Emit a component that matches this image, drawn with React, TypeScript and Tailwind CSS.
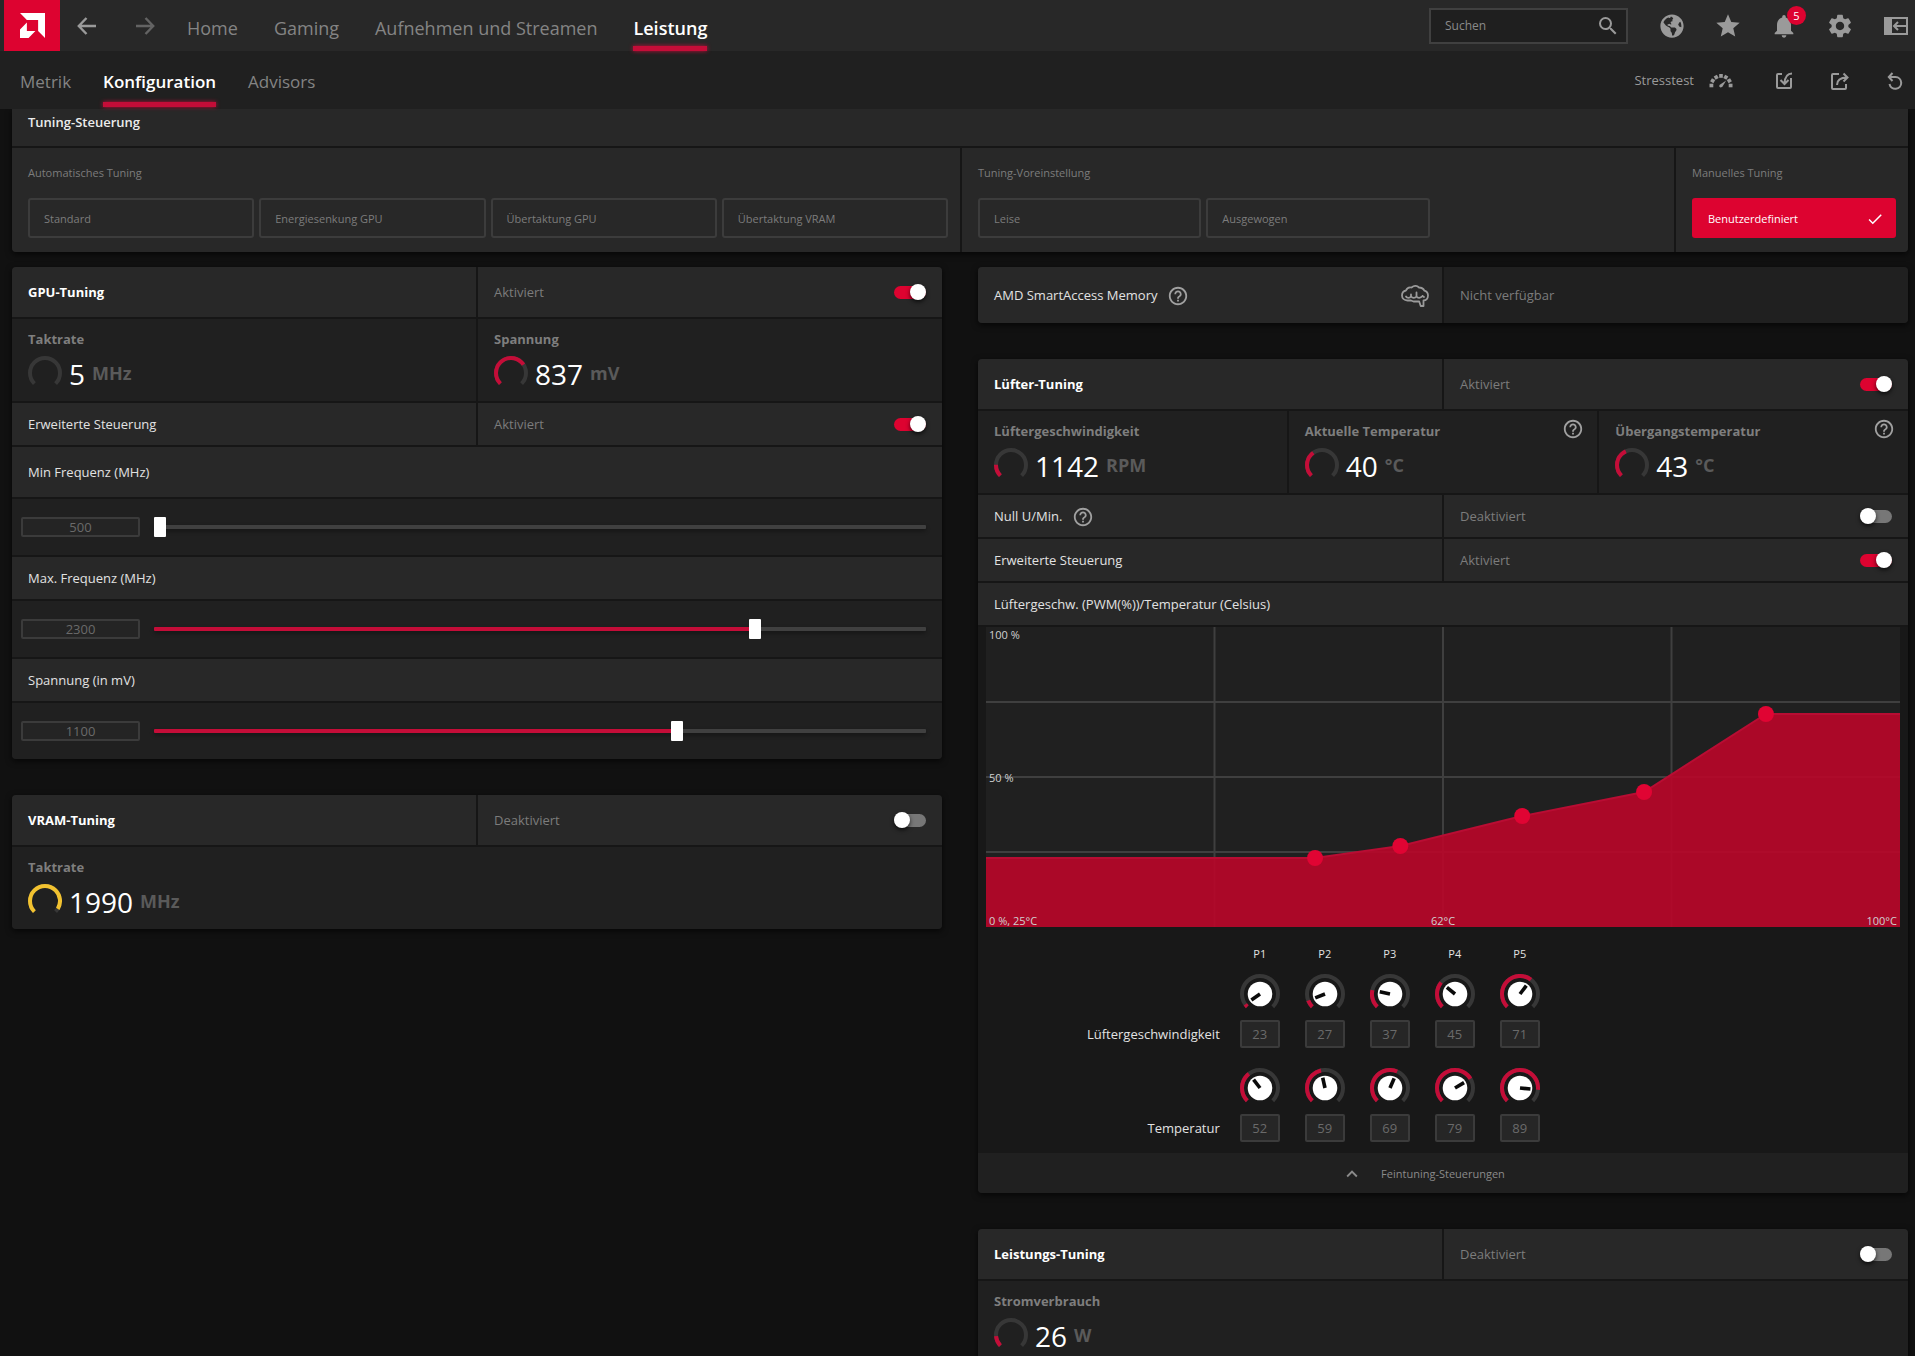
import React, { useState } from "react";
import { FaGlobeAmericas } from "react-icons/fa";
import {
  MdCheck,
  MdHelpOutline,
  MdKeyboardArrowUp,
  MdNotifications,
  MdSearch,
  MdSettings,
  MdStar,
} from "react-icons/md";

const RED = "#c40d38";

const TEMP_MIN = 25;
const TEMP_MAX = 100;
const FAN_MIN = 20;

const fanCurve = [
  { name: "P1", speed: 23, temp: 52 },
  { name: "P2", speed: 27, temp: 59 },
  { name: "P3", speed: 37, temp: 69 },
  { name: "P4", speed: 45, temp: 79 },
  { name: "P5", speed: 71, temp: 89 },
];

/* ---------- icons ---------- */

const AmdLogo = () => (
  <svg viewBox="0 0 24 24" className="h-[25px] w-[25px]" fill="#fff" aria-hidden="true">
    <path d="M0 0h24v24l-6.600-6.600V6.600H6.600z" />
    <path d="M6.600 9.200v8.200h8.200L8.200 24H0v-8.200z" />
  </svg>
);

const ArrowIcon = ({ flip = false }: { flip?: boolean }) => (
  <svg viewBox="0 0 20 18" className={flip ? "w-5 rotate-180" : "w-5"} fill="none" stroke="currentColor" strokeWidth="2.400" aria-hidden="true">
    <path d="M9.500 1 1.800 9l7.700 8M2 9h17" />
  </svg>
);

const DockIcon = () => (
  <svg viewBox="0 0 24 18" className="w-6" fill="none" stroke="currentColor" strokeWidth="2" aria-hidden="true">
    <path d="M1 1h22v16H1z" />
    <path d="M1 1h6v16H1z" fill="currentColor" />
    <path d="M22 9H10M14 5l-4 4 4 4" />
  </svg>
);

const StressIcon = () => (
  <svg viewBox="0 0 26 16" className="w-[26px]" fill="currentColor" aria-hidden="true">
    {[-90, -60, -30, 0, 30, 60, 90].map((a) => (
      <rect key={a} x="11.200" y="1" width="3.600" height="3.800" transform={`rotate(${a} 13 12.5)`} />
    ))}
    <path d="m11 13 1.200 1.500 2-.5 4-6.500-6 4z" />
  </svg>
);

const ImportIcon = () => (
  <svg viewBox="0 0 18 18" className="w-[18px]" fill="none" stroke="currentColor" strokeWidth="2" aria-hidden="true">
    <path d="M7 2H3a1 1 0 0 0-1 1v12a1 1 0 0 0 1 1h12a1 1 0 0 0 1-1V6" />
    <path d="M17 1.500c-4 0-7 2-7.500 10M5.500 8l4 4 4-4" />
  </svg>
);

const ExportIcon = () => (
  <svg viewBox="0 0 18 18" className="w-[18px]" fill="none" stroke="currentColor" strokeWidth="2" aria-hidden="true">
    <path d="M8 2H2a1 1 0 0 0-1 1v13a1 1 0 0 0 1 1h12a1 1 0 0 0 1-1v-4" />
    <path d="M6 13c0-5 3-7.500 10-7.500M12.500 1.500l4 4-4 4" />
  </svg>
);

const ResetIcon = () => (
  <svg viewBox="0 0 16 18" className="w-4" fill="none" stroke="currentColor" strokeWidth="2" aria-hidden="true">
    <path d="M2 5h6.500a5.900 5.900 0 1 1-6 7M5.500 1 1.800 5l3.700 4" />
  </svg>
);

const BrainIcon = () => (
  <svg viewBox="0 0 28 22" className="w-7 text-[#9a9a9a]" fill="none" stroke="currentColor" strokeWidth="1.800" strokeLinejoin="round" strokeLinecap="round" aria-hidden="true">
    <path d="M10 15.500H6.500C3 15.500 1 13 1 10.500S2.500 6 5 5.500C6 3 8.500 2 10.500 2.500 13 .6 16 .6 18 2.500c3 0 4.500 1.300 5.300 3.200C26 6.500 27 8.500 27 10.500c0 2.800-1.800 5-4.500 5V21h-2.800l-1.500-4.500h-5.700z" />
    <path d="M5 11.500c1 1.800 3.800 1.800 5 0 1.500 1.800 4 1.800 5.500 0 1.300 1.800 4 1.800 6-.5M10 11.500V9.500M15.500 11.500V7.500M21.500 11l1.500 1" />
  </svg>
);

/* ---------- small controls ---------- */

const HelpButton = () => (
  <button type="button" aria-label="Hilfe" className="text-[#a0a0a0]">
    <MdHelpOutline size={22} />
  </button>
);

const Toggle = ({ label, on = false }: { label: string; on?: boolean }) => {
  const [checked, setChecked] = useState(on);
  return (
    <input
      type="checkbox"
      role="switch"
      aria-label={label}
      checked={checked}
      onChange={(e) => setChecked(e.target.checked)}
      className="flex h-[13px] w-8 shrink-0 cursor-pointer appearance-none items-center rounded-full bg-[#777] after:size-4 after:shrink-0 after:rounded-full after:bg-white after:shadow-[0_2px_4px_rgba(0,0,0,0.7)] after:content-[''] checked:justify-end checked:bg-[#dd0330]"
    />
  );
};

const Arc = ({ c, r, value, color }: { c: number; r: number; value: number; color: string }) => {
  const k = r * Math.SQRT1_2;
  const d = `M${c - k} ${c + k}A${r} ${r} 0 1 1 ${c + k} ${c + k}`;
  return (
    <g fill="none" strokeWidth="4">
      <path d={d} stroke="#373737" />
      {value > 0 && <path d={d} stroke={color} pathLength={100} strokeDasharray={`${value * 100} 200`} />}
    </g>
  );
};

const Gauge = ({ label, value, unit, level, color = RED, help = false }: {
  label: string;
  value: string;
  unit: string;
  level: number;
  color?: string;
  help?: boolean;
}) => (
  <div className="flex h-[82px] justify-between bg-[#202020] pt-2.5 pr-[13px] pl-4">
    <div>
      <h3 className="text-[13px] leading-5 font-bold text-[#7e7e7e]">{label}</h3>
      <div className="mt-1 flex items-center gap-[7px]">
        <svg viewBox="0 0 34 34" className="size-[34px]" aria-hidden="true">
          <Arc c={17} r={15} value={level} color={color} />
        </svg>
        <span className="pt-[3px] pb-px text-[28px] leading-9 text-white">{value}</span>
        <span className="text-lg leading-6 font-bold text-[#5a5a5a]">{unit}</span>
      </div>
    </div>
    {help && (
      <div className="-mt-[3px]">
        <HelpButton />
      </div>
    )}
  </div>
);

const Knob = ({ level }: { level: number }) => (
  <svg viewBox="0 0 40 40" className="size-10" aria-hidden="true">
    <Arc c={20} r={18} value={level} color={RED} />
    <circle cx="20" cy="20" r="12.300" fill="#fff" />
    <path d="M20 20V9.500" stroke="#0a0a0a" strokeWidth="3.600" transform={`rotate(${level * 270 - 135} 20 20)`} />
  </svg>
);

/* ---------- card rows ---------- */

const Card = ({ children }: { children: React.ReactNode }) => (
  <section className="flex flex-col gap-0.5 overflow-hidden rounded-[4px] bg-[#161616] shadow-[0_2px_6px_rgba(0,0,0,0.7)]">
    {children}
  </section>
);

const SwitchRow = ({ title, on = false, main = false, help = false }: {
  title: string;
  on?: boolean;
  main?: boolean;
  help?: boolean;
}) => (
  <div className={`grid grid-cols-2 gap-0.5 ${main ? "h-[50px]" : "h-[42px]"}`}>
    <div className="flex items-center gap-2.5 bg-[#282828] px-4 pt-0.5">
      {main ? <h2 className="font-bold text-white">{title}</h2> : <h3 className="text-[#e2e2e2]">{title}</h3>}
      {help && <HelpButton />}
    </div>
    <div className="flex items-center justify-between bg-[#282828] px-4">
      <span className="pt-0.5 text-[#7c7c7c]">{on ? "Aktiviert" : "Deaktiviert"}</span>
      <Toggle label={title} on={on} />
    </div>
  </div>
);

const SliderRow = ({ id, label, value, min, max, tall = false }: {
  id: string;
  label: string;
  value: number;
  min: number;
  max: number;
  tall?: boolean;
}) => {
  const [current, setCurrent] = useState(value);
  const pct = ((current - min) / (max - min)) * 100;
  return (
    <>
      <div className={`flex items-center bg-[#282828] px-4 pt-0.5 ${tall ? "h-[50px]" : "h-[42px]"}`}>
        <label htmlFor={id} className="text-[#e2e2e2]">{label}</label>
      </div>
      <div className="flex h-14 items-center gap-3.5 bg-[#202020] pr-4 pl-[9px]">
        <input
          type="text"
          aria-label={`${label} Wert`}
          value={current}
          onChange={(e) => setCurrent(Number(e.target.value) || min)}
          className="h-5 w-[119px] rounded-[2px] border-2 border-[#3b3b3b] bg-[#242424] text-center text-[13px] leading-4 text-[#6a6a6a]"
        />
        <input
          id={id}
          type="range"
          min={min}
          max={max}
          value={current}
          onChange={(e) => setCurrent(Number(e.target.value))}
          style={{ background: `linear-gradient(to right, ${RED} ${pct}%, #404040 ${pct}%)` }}
          className="h-1 min-w-0 flex-1 cursor-pointer appearance-none rounded-[1px] shadow-[0_2px_4px_rgba(0,0,0,0.4)] [&::-webkit-slider-thumb]:h-5 [&::-webkit-slider-thumb]:w-3 [&::-webkit-slider-thumb]:appearance-none [&::-webkit-slider-thumb]:rounded-[1px] [&::-webkit-slider-thumb]:bg-white"
        />
      </div>
    </>
  );
};

const TuningOption = ({ label }: { label: string }) => (
  <button type="button" className="h-10 rounded-[3px] border-2 border-[#3c3c3c] pt-0.5 pl-3.5 text-left text-[11px] text-[#7c7c7c]">
    {label}
  </button>
);

/* ---------- fan curve ---------- */

const CHART_W = 914;
const CHART_H = 300;

const FanChart = () => {
  const pts = fanCurve.map((p) => ({
    x: ((p.temp - TEMP_MIN) / (TEMP_MAX - TEMP_MIN)) * CHART_W,
    y: CHART_H - (p.speed / 100) * CHART_H,
  }));
  const line = [`0,${pts[0].y}`, ...pts.map((p) => `${p.x},${p.y}`), `${CHART_W},${pts[4].y}`].join(" ");
  return (
    <svg viewBox={`0 0 ${CHART_W} ${CHART_H}`} className="block w-full bg-[#202020]" role="img" aria-label="Lüfterkurve">
      <g stroke="#3f3f3f" strokeWidth="2">
        {[0.25, 0.5, 0.75].map((f) => (
          <React.Fragment key={f}>
            <path d={`M${f * CHART_W} 0V${CHART_H}`} />
            <path d={`M0 ${f * CHART_H}H${CHART_W}`} />
          </React.Fragment>
        ))}
      </g>
      <polygon points={`0,${CHART_H} ${line} ${CHART_W},${CHART_H}`} fill="#ba0529" fillOpacity="0.9" />
      <polyline points={line} fill="none" stroke="#b80d33" strokeWidth="2" />
      {pts.map((p) => (
        <circle key={p.x} cx={p.x} cy={p.y} r="8" fill="#e00433" />
      ))}
      <g fontSize="11" fill="#d0d0d0">
        <text x="3" y="12">100 %</text>
        <text x="3" y="155">50 %</text>
        <text x="3" y="298">0 %, 25°C</text>
        <text x={CHART_W / 2} y="298" textAnchor="middle">62°C</text>
        <text x={CHART_W - 3} y="298" textAnchor="end">100°C</text>
      </g>
    </svg>
  );
};

const KnobRow = ({ label, values, min }: { label: string; values: number[]; min: number }) => (
  <div className="flex items-end gap-5">
    <div className="w-[26%] pb-1 text-right text-[#e2e2e2]">{label}</div>
    <div className="flex gap-[25px]">
      {values.map((v, i) => (
        <div key={i} className="flex w-10 flex-col gap-1.5">
          <Knob level={(v - min) / (100 - min)} />
          <input
            type="text"
            aria-label={`${label} P${i + 1}`}
            defaultValue={v}
            className="h-7 w-10 rounded-[2px] border-2 border-[#3b3b3b] bg-[#262626] text-center text-[13px] text-[#6a6a6a]"
          />
        </div>
      ))}
    </div>
  </div>
);

/* ---------- header ---------- */

const NavLink = ({ label, active = false, sub = false }: { label: string; active?: boolean; sub?: boolean }) => (
  <a
    href="#"
    className={`flex h-full flex-col justify-end ${sub ? "pb-0.5 text-[17px]" : "text-lg"} ${active ? "font-semibold text-white" : "text-[#848484]"}`}
  >
    <span className={sub ? "pb-2" : "pb-1"}>{label}</span>
    <span className={`h-[5px] w-full ${active ? "bg-[#c40d38] shadow-[0_0_4px_#c40d38]" : ""}`} />
  </a>
);

const Header = () => (
  <header className="relative z-10 text-[#9a9a9a]">
    <div className="flex h-[51px] items-center justify-between bg-[#282828] shadow-[0_1px_4px_rgba(0,0,0,0.9)]">
      <div className="flex h-full items-center pl-1">
        <a href="#" aria-label="AMD" className="flex h-full w-14 items-center justify-center bg-[#dd0330]">
          <AmdLogo />
        </a>
        <button type="button" aria-label="Zurück" className="ml-[17px]"><ArrowIcon /></button>
        <button type="button" aria-label="Vorwärts" className="ml-[38px] text-[#636363]"><ArrowIcon flip /></button>
        <nav className="ml-8 flex h-full gap-9">
          <NavLink label="Home" />
          <NavLink label="Gaming" />
          <NavLink label="Aufnehmen und Streamen" />
          <NavLink label="Leistung" active />
        </nav>
      </div>
      <div className="flex items-center gap-[30px] pr-[5px]">
        <label className="flex h-9 w-[199px] items-center justify-between border-2 border-[#404040] bg-[#1f1f1f] pr-1.5 pl-3.5">
          <input type="text" placeholder="Suchen" aria-label="Suchen" className="w-32 bg-transparent text-xs outline-none placeholder:text-[#8a8a8a]" />
          <MdSearch size={24} />
        </label>
        <div className="flex items-center gap-7">
          <button type="button" aria-label="Web" className="flex w-7 justify-center"><FaGlobeAmericas size={24} /></button>
          <button type="button" aria-label="Favoriten"><MdStar size={28} /></button>
          <button type="button" aria-label="Benachrichtigungen" className="relative">
            <MdNotifications size={28} />
            <span className="absolute -top-1.5 -right-2 flex size-[19px] items-center justify-center rounded-full bg-[#dd0330] text-[11px] leading-none text-white">5</span>
          </button>
          <button type="button" aria-label="Einstellungen"><MdSettings size={28} /></button>
          <button type="button" aria-label="Andocken" className="flex w-7 justify-center"><DockIcon /></button>
        </div>
      </div>
    </div>
    <div className="flex h-[58px] items-center justify-between bg-[#202020] pr-3 pl-5">
      <nav className="flex h-full gap-8">
        <NavLink label="Metrik" sub />
        <NavLink label="Konfiguration" sub active />
        <NavLink label="Advisors" sub />
      </nav>
      <div className="flex items-center pt-0.5">
        <button type="button" className="flex items-center gap-3.5 text-[13px]">
          Stresstest
          <StressIcon />
        </button>
        <button type="button" aria-label="Importieren" className="ml-[41px]"><ImportIcon /></button>
        <button type="button" aria-label="Exportieren" className="ml-[38px]"><ExportIcon /></button>
        <button type="button" aria-label="Zurücksetzen" className="ml-[38px]"><ResetIcon /></button>
      </div>
    </div>
  </header>
);

/* ---------- page ---------- */

const TuningControl = () => (
  <section className="overflow-hidden rounded-b-[4px] bg-[#161616] shadow-[0_2px_6px_rgba(0,0,0,0.7)]">
    <div className="flex h-[37px] items-center bg-[#282828] px-4 pb-2.5">
      <h2 className="font-semibold text-[#ececec]">Tuning-Steuerung</h2>
    </div>
    <div className="mt-0.5 grid grid-cols-[948fr_712fr_232fr] gap-0.5 text-[11px] text-[#7c7c7c]">
      <div className="bg-[#282828] pt-4 pr-3 pb-3.5 pl-4">
        <h3 className="mb-4 leading-[18px]">Automatisches Tuning</h3>
        <div className="grid grid-cols-4 gap-[5px]">
          <TuningOption label="Standard" />
          <TuningOption label="Energiesenkung GPU" />
          <TuningOption label="Übertaktung GPU" />
          <TuningOption label="Übertaktung VRAM" />
        </div>
      </div>
      <div className="bg-[#282828] px-4 pt-4 pb-3.5">
        <h3 className="mb-4 leading-[18px]">Tuning-Voreinstellung</h3>
        <div className="grid grid-cols-3 gap-[5px]">
          <TuningOption label="Leise" />
          <TuningOption label="Ausgewogen" />
        </div>
      </div>
      <div className="bg-[#282828] pt-4 pr-3 pb-3.5 pl-4">
        <h3 className="mb-4 leading-[18px]">Manuelles Tuning</h3>
        <button type="button" className="flex h-10 w-full items-center justify-between rounded-[3px] bg-[#dd0330] pt-0.5 pr-3 pl-4 text-white">
          Benutzerdefiniert
          <MdCheck size={18} />
        </button>
      </div>
    </div>
  </section>
);

const App = () => {
  return (
    <div className="flex h-screen flex-col overflow-hidden bg-[#111] font-['Open_Sans','Noto_Sans',sans-serif] text-[13px]">
      <Header />
      <main className="min-h-0 flex-1 overflow-hidden pr-[7px] pl-3">
        <TuningControl />
        <div className="mt-[15px] grid grid-cols-2 items-start gap-9">
          <div className="flex flex-col gap-9">
            <Card>
              <SwitchRow title="GPU-Tuning" on main />
              <div className="grid grid-cols-2 gap-0.5">
                <Gauge label="Taktrate" value="5" unit="MHz" level={0} />
                <Gauge label="Spannung" value="837" unit="mV" level={0.71} />
              </div>
              <SwitchRow title="Erweiterte Steuerung" on />
              <SliderRow id="min-freq" label="Min Frequenz (MHz)" value={500} min={500} max={2800} tall />
              <SliderRow id="max-freq" label="Max. Frequenz (MHz)" value={2300} min={500} max={2800} />
              <SliderRow id="voltage" label="Spannung (in mV)" value={1100} min={675} max={1300} />
            </Card>
            <Card>
              <SwitchRow title="VRAM-Tuning" main />
              <Gauge label="Taktrate" value="1990" unit="MHz" level={0.95} color="#f2c230" />
            </Card>
          </div>

          <div className="flex flex-col gap-9">
            <Card>
              <div className="grid h-14 grid-cols-2 gap-0.5">
                <div className="flex items-center justify-between bg-[#282828] pt-0.5 pr-[13px] pl-4">
                  <div className="flex items-center gap-2.5">
                    <h2 className="text-[#e2e2e2]">AMD SmartAccess Memory</h2>
                    <HelpButton />
                  </div>
                  <BrainIcon />
                </div>
                <div className="flex items-center bg-[#202020] px-4 pt-0.5 text-[#7c7c7c]">Nicht verfügbar</div>
              </div>
            </Card>

            <Card>
              <SwitchRow title="Lüfter-Tuning" on main />
              <div className="grid grid-cols-3 gap-0.5">
                <Gauge label="Lüftergeschwindigkeit" value="1142" unit="RPM" level={0.17} />
                <Gauge label="Aktuelle Temperatur" value="40" unit="°C" level={0.37} help />
                <Gauge label="Übergangstemperatur" value="43" unit="°C" level={0.41} help />
              </div>
              <SwitchRow title="Null U/Min." help />
              <SwitchRow title="Erweiterte Steuerung" on />
              <div className="flex h-[42px] items-center bg-[#282828] px-4 pt-0.5">
                <h3 className="text-[#e2e2e2]">Lüftergeschw. (PWM(%))/Temperatur (Celsius)</h3>
              </div>
              <div className="-mb-0.5 bg-[#181818] px-2">
                <FanChart />
              </div>
              <div className="bg-[#181818] pt-[18px] pb-[11px]">
                <div className="flex gap-5 text-[11px] leading-[18px] text-[#e2e2e2]">
                  <div className="w-[26%]" />
                  <div className="flex gap-[25px]">
                    {fanCurve.map((p) => (
                      <div key={p.name} className="w-10 text-center">{p.name}</div>
                    ))}
                  </div>
                </div>
                <div className="mt-[11px] flex flex-col gap-5">
                  <KnobRow label="Lüftergeschwindigkeit" values={fanCurve.map((p) => p.speed)} min={FAN_MIN} />
                  <KnobRow label="Temperatur" values={fanCurve.map((p) => p.temp)} min={TEMP_MIN} />
                </div>
              </div>
              <button type="button" className="-mt-0.5 grid h-10 grid-cols-[1fr_auto_1fr] items-center gap-[18px] bg-[#202020] pt-0.5 text-[11px] text-[#8a8a8a]">
                <MdKeyboardArrowUp size={22} className="justify-self-end" />
                Feintuning-Steuerungen
              </button>
            </Card>

            <Card>
              <SwitchRow title="Leistungs-Tuning" main />
              <Gauge label="Stromverbrauch" value="26" unit="W" level={0.15} />
            </Card>
          </div>
        </div>
      </main>
    </div>
  );
};

export default App;
